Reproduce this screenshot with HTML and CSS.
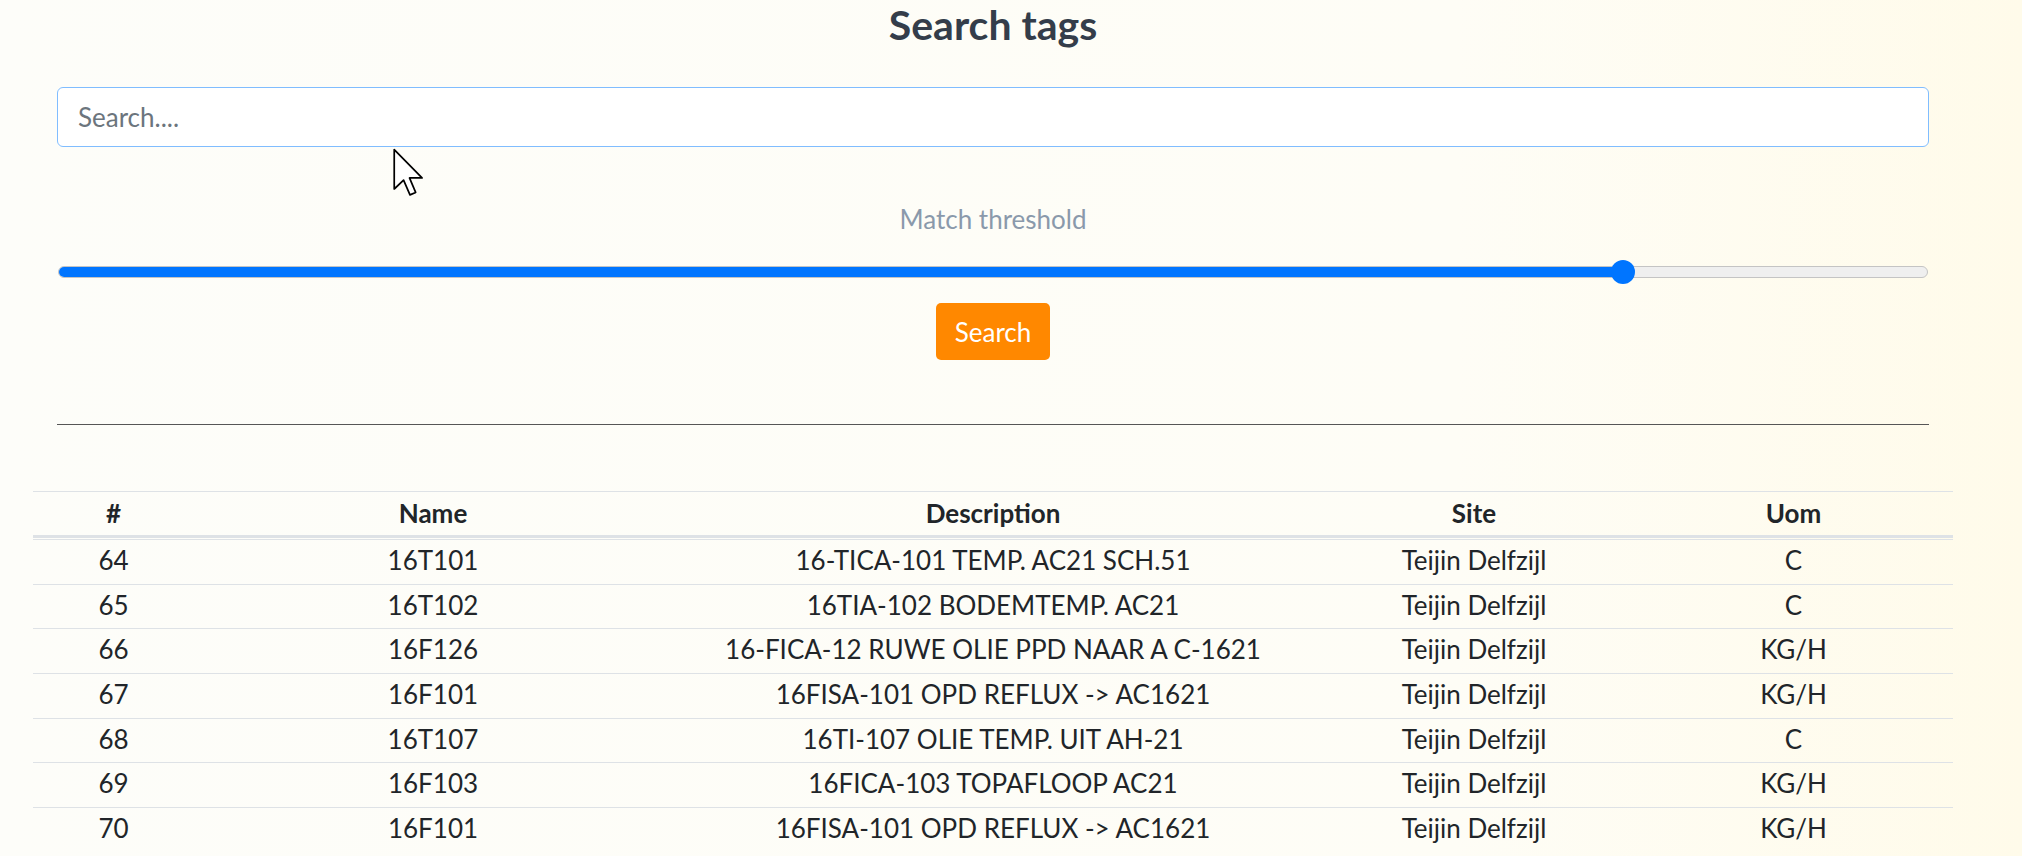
FILE: index.html
```html
<!DOCTYPE html>
<html lang="en">
<head>
<meta charset="utf-8">
<title>Search tags</title>
<link rel="stylesheet" href="styles.css">
</head>
<body>
<main class="page">
  <h1 class="title">Search tags</h1>
  <section class="form">
    <input class="search-input" type="text" placeholder="Search....">
    <div class="threshold-label">Match threshold</div>
    <div class="slider">
      <div class="track"><div class="fill" style="width:83.65%"></div></div>
      <div class="thumb" style="left:83.65%"></div>
    </div>
    <div class="actions"><button class="btn-search" type="button">Search</button></div>
    <hr class="divider">
  </section>
  <table class="results">
    <colgroup>
      <col class="c-num"><col class="c-name"><col class="c-desc"><col class="c-site"><col class="c-uom">
    </colgroup>
    <thead>
      <tr><th>#</th><th>Name</th><th>Description</th><th>Site</th><th>Uom</th></tr>
    </thead>
    <tbody>
      <tr><td>64</td><td>16T101</td><td>16-TICA-101 TEMP. AC21 SCH.51</td><td>Teijin Delfzijl</td><td>C</td></tr>
      <tr><td>65</td><td>16T102</td><td>16TIA-102 BODEMTEMP. AC21</td><td>Teijin Delfzijl</td><td>C</td></tr>
      <tr><td>66</td><td>16F126</td><td>16-FICA-12 RUWE OLIE PPD NAAR A C-1621</td><td>Teijin Delfzijl</td><td>KG/H</td></tr>
      <tr><td>67</td><td>16F101</td><td>16FISA-101 OPD REFLUX -&gt; AC1621</td><td>Teijin Delfzijl</td><td>KG/H</td></tr>
      <tr><td>68</td><td>16T107</td><td>16TI-107 OLIE TEMP. UIT AH-21</td><td>Teijin Delfzijl</td><td>C</td></tr>
      <tr><td>69</td><td>16F103</td><td>16FICA-103 TOPAFLOOP AC21</td><td>Teijin Delfzijl</td><td>KG/H</td></tr>
      <tr><td>70</td><td>16F101</td><td>16FISA-101 OPD REFLUX -&gt; AC1621</td><td>Teijin Delfzijl</td><td>KG/H</td></tr>
    </tbody>
  </table>
</main>
<svg class="cursor" width="32" height="50" viewBox="0 0 13 20" aria-hidden="true">
  <path d="M0.5 0.5 L0.5 16.5 L4.3 12.9 L6.9 18.9 L9.2 17.9 L6.7 12 L11.8 12 Z" fill="#fff" stroke="#000" stroke-width="0.7" stroke-linejoin="round"/>
</svg>
</body>
</html>
```

FILE: styles.css
```css
html, body {
  margin: 0;
  padding: 0;
}
body {
  min-height: 856px;
  background: linear-gradient(90deg, #fdfdf9 0%, #fefdf6 72%, #fffbea 100%);
  font-family: "Lato", "Noto Sans", sans-serif;
  color: #212529;
  overflow: hidden;
}
.page {
  width: 1920px;
  margin-left: 33px;
}
.title {
  margin: 0;
  height: 50px;
  line-height: 50px;
  text-align: center;
  font-size: 41px;
  font-weight: 700;
  color: #343d4a;
}
.form {
  padding: 37px 24px 0;
}
.search-input {
  display: block;
  box-sizing: border-box;
  width: 100%;
  height: 60px;
  margin: 0;
  padding: 0 20px;
  border: 1px solid #80bdff;
  border-radius: 6px;
  background: #fff;
  font-family: inherit;
  font-size: 26px;
  color: #495057;
  outline: none;
}
.search-input::placeholder {
  color: #6c757d;
}
.threshold-label {
  margin-top: 57px;
  line-height: 30px;
  text-align: center;
  font-size: 26px;
  color: #8a99ab;
}
.slider {
  position: relative;
  margin-top: 26px;
  height: 24px;
  display: flex;
  align-items: center;
}
.track {
  box-sizing: border-box;
  flex: 1;
  height: 12px;
  margin: 0 1px;
  border: 1px solid #c4c4c4;
  border-radius: 6px;
  background: #efefef;
  overflow: hidden;
}
.fill {
  height: 100%;
  margin: -1px 0 0 -1px;
  padding-bottom: 2px;
  background: #0075ff;
}
.thumb {
  position: absolute;
  top: 0;
  width: 24px;
  height: 24px;
  margin-left: -12px;
  border-radius: 50%;
  background: #0075ff;
}
.actions {
  display: flex;
  justify-content: center;
  margin-top: 19px;
}
.btn-search {
  width: 114px;
  height: 57px;
  border: none;
  border-radius: 5px;
  background: #ff8800;
  color: #fff;
  font-family: inherit;
  font-size: 26px;
  padding: 0;
}
.divider {
  margin: 64px 0 0;
  border: 0;
  border-top: 1px solid #565656;
  height: 0;
}
.results {
  margin-top: 66px;
  width: 1920px;
  table-layout: fixed;
  border-collapse: separate;
  border-spacing: 0;
  font-size: 26px;
}
.c-num { width: 161px; }
.c-name { width: 478px; }
.c-desc { width: 642px; }
.c-site { width: 320px; }
.c-uom { width: 319px; }
.results th {
  font-weight: 700;
  line-height: 30px;
  padding: 5.5px 0 10.5px;
  text-align: center;
  border-top: 1px solid #dee2e6;
  border-bottom: 1px solid transparent;
  box-shadow: inset 0 -3px 0 #dee2e6;
}
.results td {
  line-height: 30px;
  padding: 5px 0 8.7px;
  text-align: center;
  border-top: 1px solid #dee2e6;
  white-space: nowrap;
}
.cursor {
  position: absolute;
  left: 393px;
  top: 148px;
}
```
